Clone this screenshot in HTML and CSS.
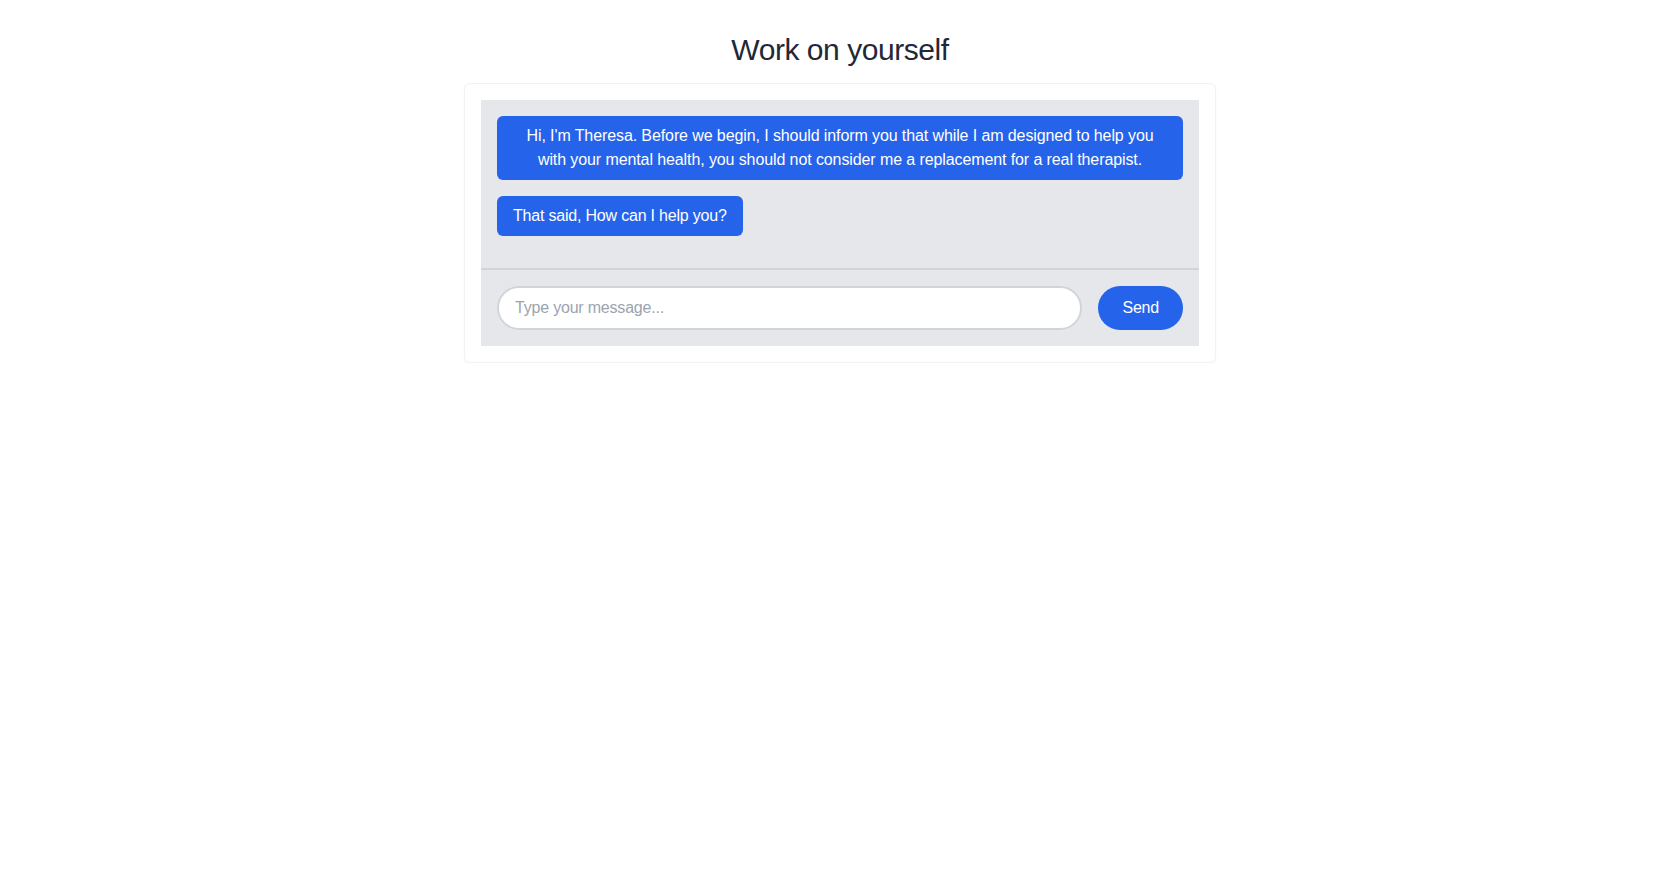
FILE: index.html
```html
<!DOCTYPE html>
<html lang="en">
<head>
    <meta charset="UTF-8">
    <meta name="viewport" content="width=device-width, initial-scale=1.0">
    <title>Work on yourself</title>
    <link rel="stylesheet" href="styles.css">
</head>
<body>
    <div class="page">
        <h1>Work on yourself</h1>

        <div class="card">
            <div class="chat">
                <div class="messages">
                    <div class="bubble center">Hi, I'm Theresa. Before we begin, I should inform you that while I am designed to help you with your mental health, you should not consider me a replacement for a real therapist.</div>
                    <div class="bubble">That said, How can I help you?</div>
                </div>
                <div class="composer">
                    <input type="text" class="msg-input" placeholder="Type your message...">
                    <button class="send">Send</button>
                </div>
            </div>
        </div>
    </div>
</body>
</html>
```

FILE: styles.css
```css
/* General */
* {
    margin: 0;
    padding: 0;
    box-sizing: border-box;
    font-family: "Liberation Sans", Arial, sans-serif;
}

body {
    background-color: #fff;
}

.page {
    display: flex;
    flex-direction: column;
    align-items: center;
    padding-top: 32px;
}

h1 {
    font-size: 30px;
    line-height: 36px;
    font-weight: normal;
    letter-spacing: -0.45px;
    color: #1f2937;
    margin-bottom: 15px;
}

/* Card */
.card {
    width: 752px;
    padding: 16px;
    background-color: #fff;
    border: 1px solid #f1f2f4;
    border-radius: 6px;
    box-shadow: 0 1px 2px rgba(0, 0, 0, 0.04);
}

.chat {
    background-color: #e5e7eb;
}

.messages {
    padding: 16px 16px 0;
    display: flex;
    flex-direction: column;
    align-items: flex-start;
}

.bubble {
    background-color: #2563eb;
    color: #fff;
    font-size: 16px;
    line-height: 24px;
    letter-spacing: -0.2px;
    padding: 8px 16px;
    border-radius: 6px;
    margin-bottom: 16px;
}

.bubble.center {
    text-align: center;
    align-self: stretch;
    padding: 8px 24px;
    letter-spacing: -0.1px;
}

.messages .bubble:last-child {
    margin-bottom: 32px;
}

/* Composer */
.composer {
    display: flex;
    gap: 16px;
    padding: 16px;
    border-top: 2px solid #d1d5db;
}

.msg-input {
    flex: 1;
    height: 44px;
    padding: 8px 16px;
    font-size: 16px;
    letter-spacing: -0.2px;
    color: #1f2937;
    background-color: #fff;
    border: 2px solid #d1d5db;
    border-radius: 9999px;
    outline: none;
}

.msg-input::placeholder {
    color: #9ca3af;
}

.send {
    height: 44px;
    padding: 0 24px;
    background-color: #2563eb;
    color: #fff;
    font-size: 16px;
    letter-spacing: -0.2px;
    border: none;
    border-radius: 9999px;
    cursor: pointer;
}
```
